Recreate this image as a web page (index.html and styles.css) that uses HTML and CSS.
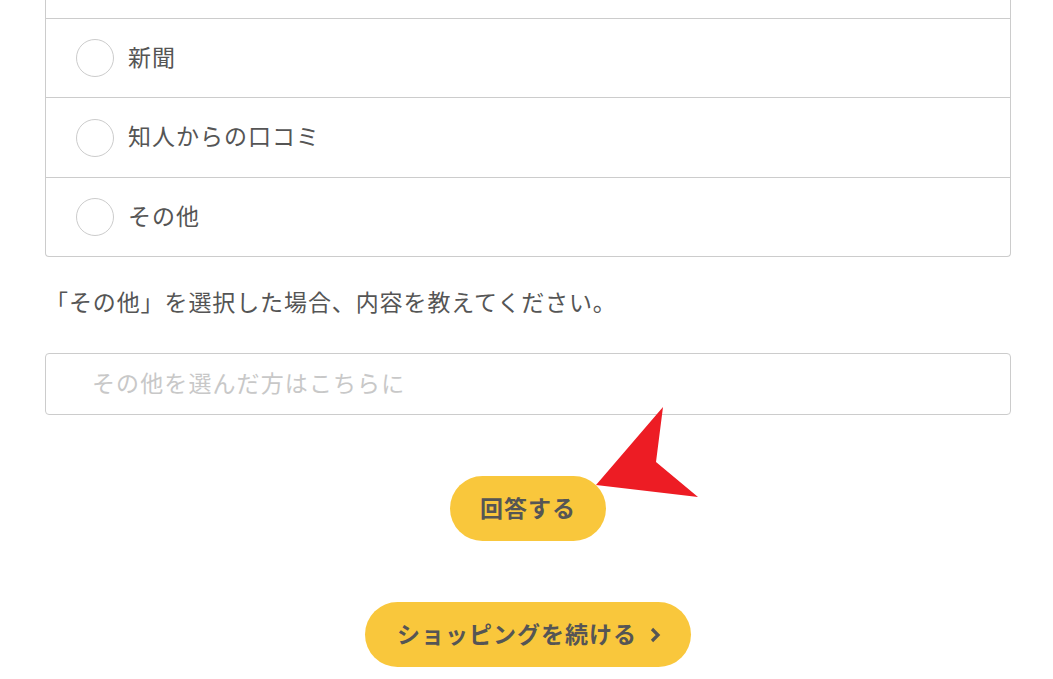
FILE: index.html
```html
<!DOCTYPE html>
<html lang="ja">
<head>
  <meta charset="UTF-8">
  <meta name="viewport" content="width=device-width, initial-scale=1.0">
  <title>アンケート</title>
  <link rel="stylesheet" href="styles.css">
</head>
<body>
  <div class="page">
    <ul class="choices">
      <li class="choice choice-cut"></li>
      <li class="choice"><span class="radio"></span><span class="choice-text">新聞</span></li>
      <li class="choice"><span class="radio"></span><span class="choice-text">知人からの口コミ</span></li>
      <li class="choice"><span class="radio"></span><span class="choice-text">その他</span></li>
    </ul>
    <p class="question">「その他」を選択した場合、内容を教えてください。</p>
    <input class="other-input" type="text" placeholder="その他を選んだ方はこちらに">
    <div class="actions">
      <button class="btn btn-answer">回答する</button>
      <svg class="pointer" width="104" height="94" viewBox="0 0 104 94">
        <polygon points="67,1 60,56 102,91 0,79" fill="#ed1c24"/>
      </svg>
      <button class="btn btn-continue">ショッピングを続ける
        <svg class="chevron" width="12" height="16" viewBox="0 0 12 16">
          <polyline points="3,2 9,8 3,14" fill="none" stroke="#555" stroke-width="3.2"/>
        </svg>
      </button>
    </div>
  </div>
</body>
</html>
```

FILE: styles.css
```css
* {
  padding: 0;
  margin: 0;
  box-sizing: border-box;
}
html,body {
  width: 100%;
  height: 100%;
}
body {
  font-family: "Noto Sans CJK JP", "Noto Sans", sans-serif;
  color: #555;
  background: #fff;
  overflow: hidden;
}
ul {
  list-style: none;
}
.page {
  padding: 0 42px 0 45px;
}
/* 上にスクロールして切れている行 */
.choices {
  border: 1px solid #ccc;
  border-top: none;
  border-radius: 0 0 4px 4px;
}
.choice {
  display: flex;
  align-items: center;
  height: 79px;
  padding-left: 30px;
  border-bottom: 1px solid #ccc;
}
.choice:nth-child(3) {
  height: 80px;
}
.choice:last-child {
  height: 78px;
  border-bottom: none;
}
.choice-cut {
  height: 19px;
}
.radio {
  width: 38px;
  height: 38px;
  border: 1px solid #ccc;
  border-radius: 50%;
  flex-shrink: 0;
}
.choice-text {
  margin-left: 14px;
  padding-bottom: 5px;
  font-size: 23px;
  letter-spacing: 1px;
}
.question {
  margin-top: 28px;
  font-size: 23px;
  line-height: 33px;
  letter-spacing: 0.9px;
}
.other-input {
  display: block;
  width: 100%;
  height: 62px;
  margin-top: 35px;
  padding-left: 46px;
  padding-bottom: 4px;
  border: 1px solid #ccc;
  border-radius: 4px;
  font-family: inherit;
  font-size: 23px;
  letter-spacing: 1.1px;
  color: #555;
  outline: none;
}
.other-input::placeholder {
  color: #c8c8c8;
}
.actions {
  position: relative;
  display: flex;
  flex-direction: column;
  align-items: center;
  gap: 61px;
  padding-top: 61px;
}
.btn {
  display: flex;
  align-items: center;
  justify-content: center;
  height: 65px;
  padding-bottom: 4px;
  border: none;
  border-radius: 33px;
  background: #f9c73c;
  color: #555;
  font-family: inherit;
  font-size: 23px;
  font-weight: bold;
  letter-spacing: 1px;
}
.btn-answer {
  width: 156px;
}
.btn-continue {
  width: 326px;
  padding-left: 2px;
}
.chevron {
  margin-left: 12px;
  margin-top: 4px;
}
.pointer {
  position: absolute;
  left: 551px;
  top: -9px;
}
```
